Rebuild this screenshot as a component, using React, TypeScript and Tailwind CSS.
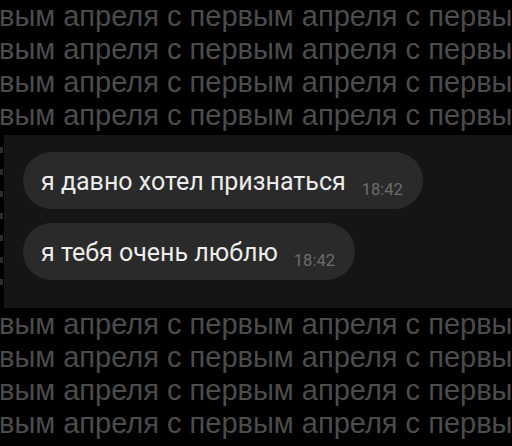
const LINE = "вым апреля с первым апреля с первым апреля с первым";

function BgLines() {
  return (
    <div className="overflow-hidden whitespace-nowrap text-[29px] leading-[33px] text-[#4c4c4c] [font-family:'Liberation_Sans',Arial,sans-serif]">
      {[0, 1, 2, 3].map((i) => (
        <div key={i} className="-ml-[1px]">{LINE}</div>
      ))}
    </div>
  );
}

function Bubble({ text, time }: { text: string; time: string }) {
  return (
    <div className="flex items-start self-start rounded-[29px] bg-[#2a2a2a] pl-[18px] pr-[20px] h-[57px] pt-[17px]">
      <span className="text-[25px] leading-[25px] text-[#ececec]">{text}</span>
      <span className="ml-4 mt-[13px] text-[16.5px] leading-[16.5px] text-[#6c6c6c]">{time}</span>
    </div>
  );
}

export default function App() {
  return (
    <div className="w-[512px] h-[446px] overflow-hidden bg-black [font-family:Roboto,'Noto_Sans',sans-serif]">
      <BgLines />
      <div className="mt-[3px] flex h-[173px]">
        <div className="w-[4px] flex flex-col gap-[16px] pt-[12px]">
          {[0, 1, 2, 3, 4, 5, 6].map((i) => (
            <div key={i} className="h-[6px] w-[3px] bg-[#2c2c2c]" />
          ))}
        </div>
        <div className="flex-1 bg-[#151515] flex flex-col gap-[14px] pl-[19px] pt-[17px]">
          <Bubble text="я давно хотел признаться" time="18:42" />
          <Bubble text="я тебя очень люблю" time="18:42" />
        </div>
      </div>
      <BgLines />
    </div>
  );
}
